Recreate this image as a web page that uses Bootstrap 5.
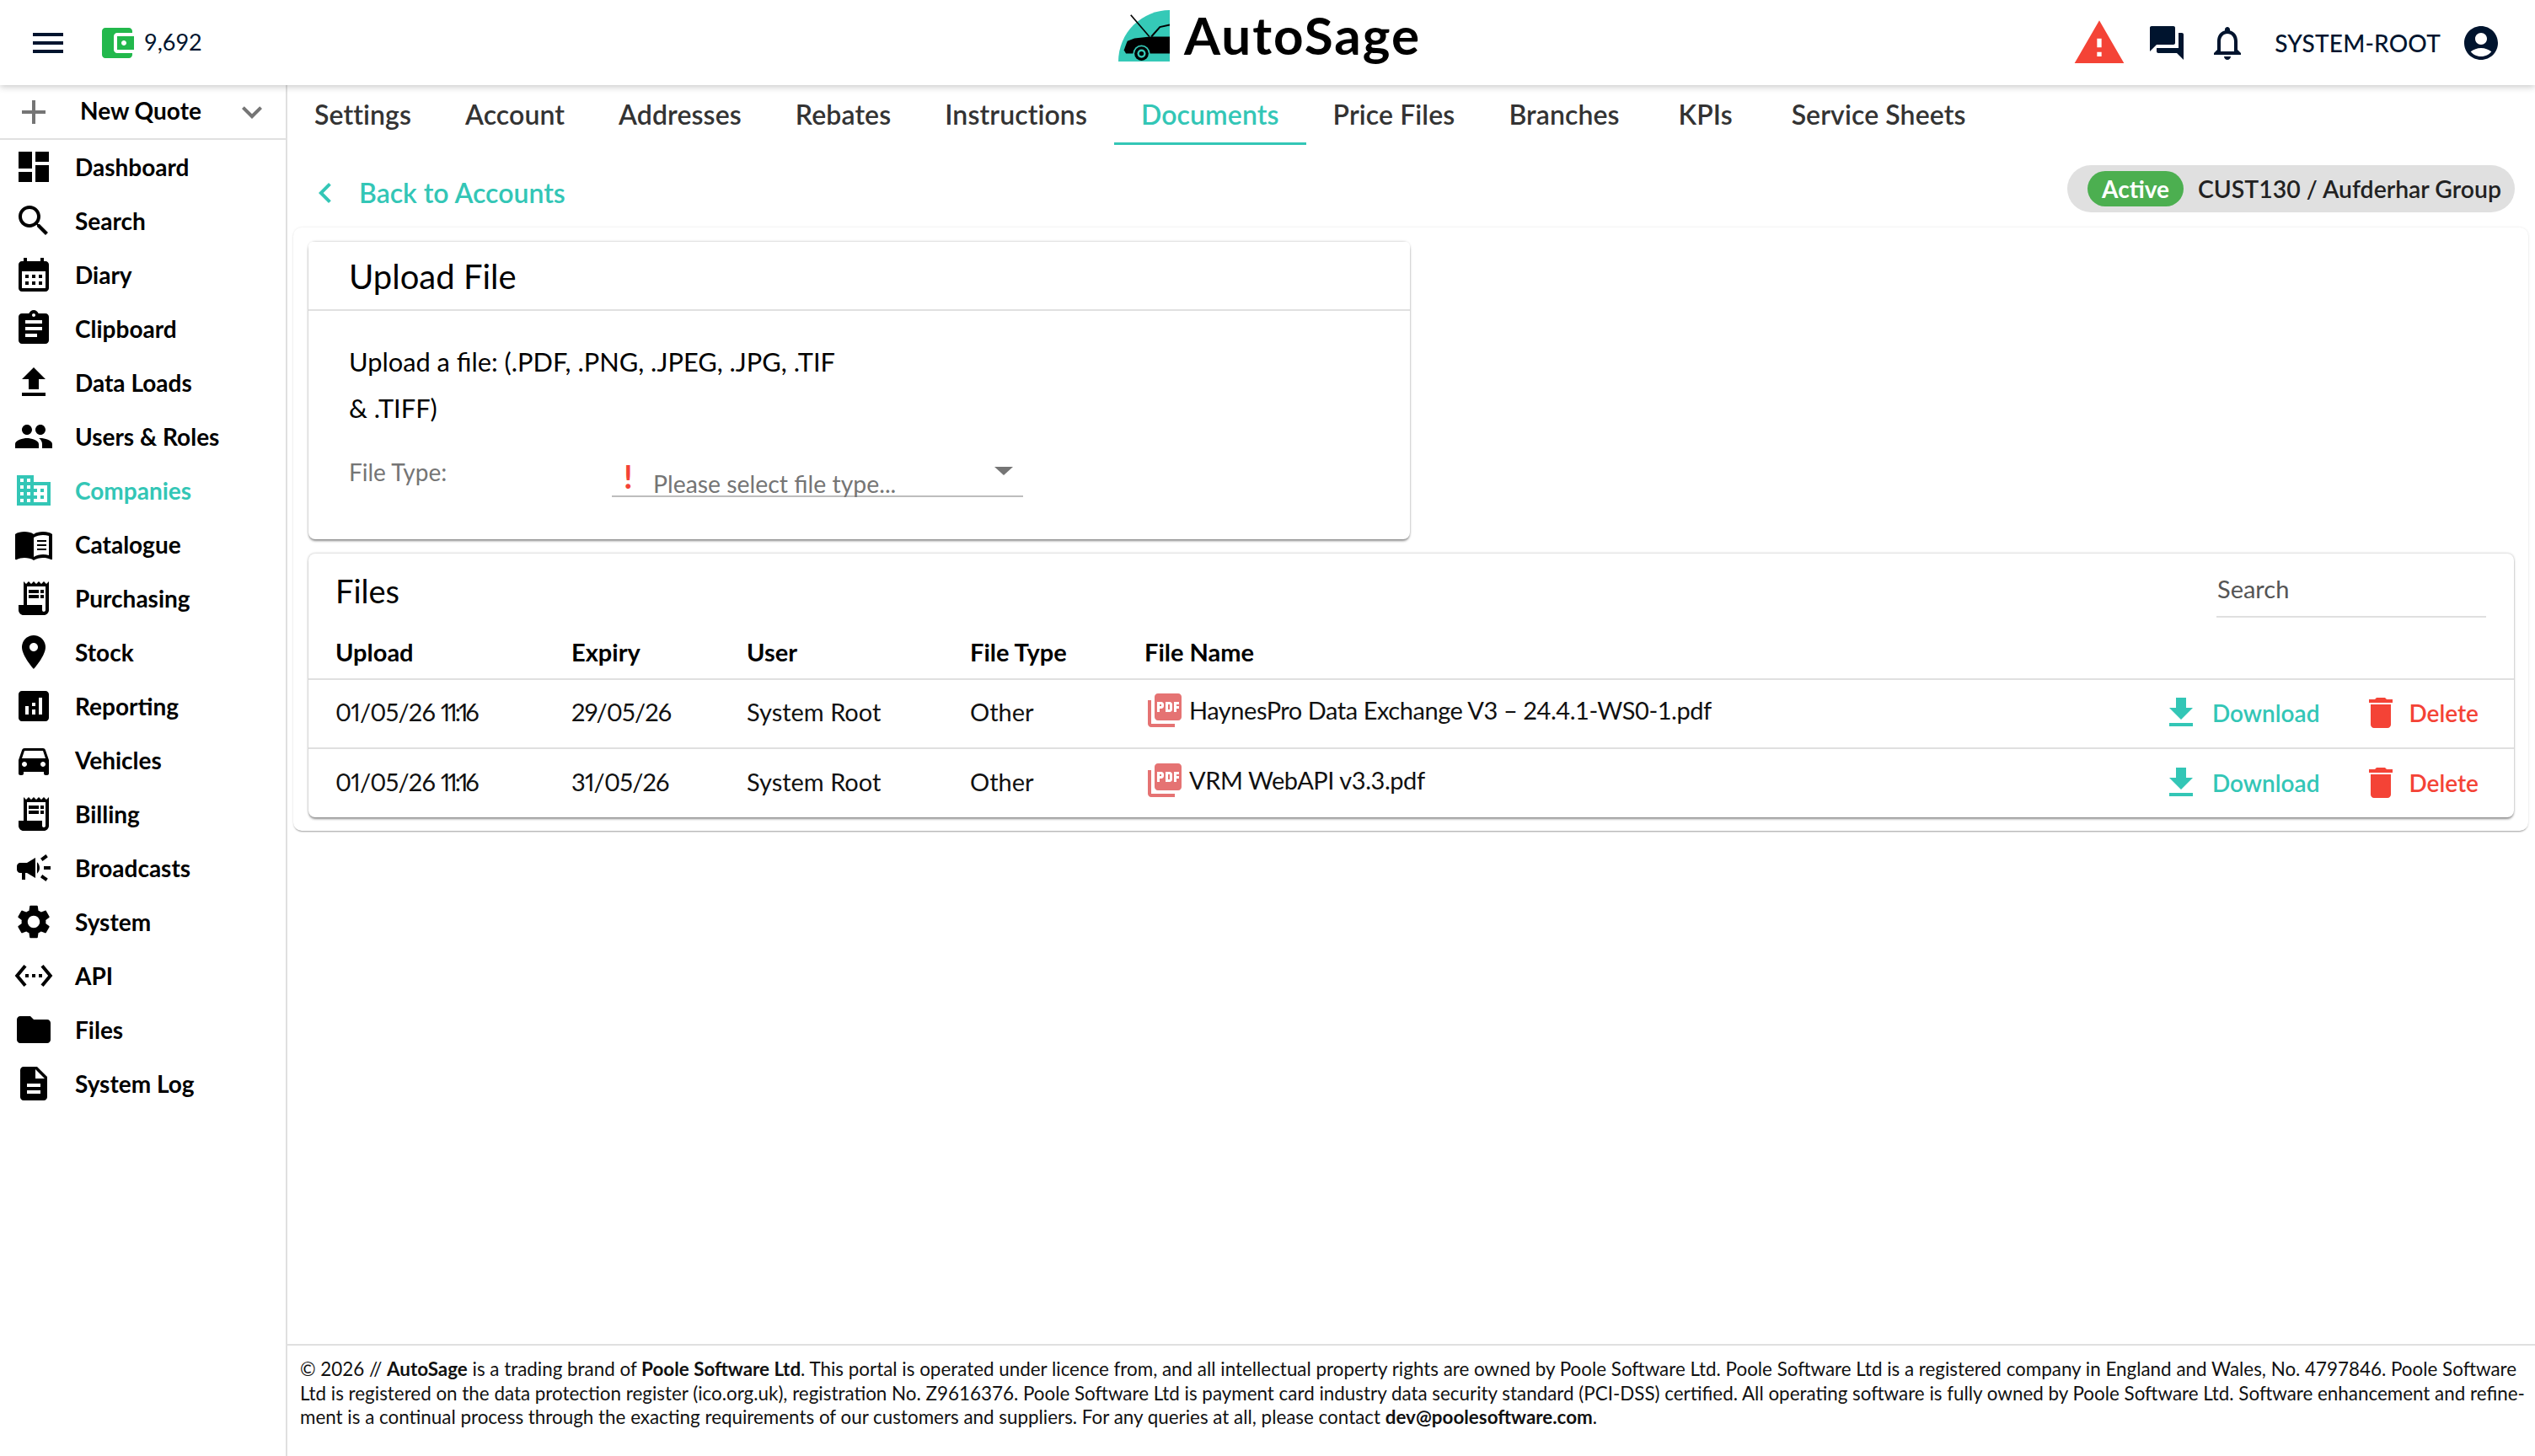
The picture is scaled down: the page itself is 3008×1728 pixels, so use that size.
<!DOCTYPE html>
<html lang="en">
<head>
  <meta charset="UTF-8"/>
  <meta name="viewport" content="width=device-width, initial-scale=1.0"/>
  <title>AutoSage - Documents</title>
  <link href="https://cdn.jsdelivr.net/npm/bootstrap@5.3.0/dist/css/bootstrap.min.css" rel="stylesheet"/>
  <script src="https://cdn.jsdelivr.net/npm/bootstrap@5.3.0/dist/js/bootstrap.bundle.min.js" defer></script>
  <style>
    :root {
      --teal: #33c6b6;
      --red: #f44336;
      --navy: #00142e;
      --line: #e0e0e0;
    }

    body {
      font-family: "Lato", "Liberation Sans", sans-serif;
      font-size: 29px;
      color: #000;
      background: #fff;
    }

    svg { fill: currentColor; flex-shrink: 0; display: block; }
    .ic-48 { width: 48px; height: 48px; }

    /* top bar */
    .top-bar {
      height: 101px;
      flex-shrink: 0;
      background: #fff;
      box-shadow: 0 2px 8px rgba(0,0,0,.22);
      z-index: 5;
      color: var(--navy);
    }
    .top-side { flex: 1 1 0; }
    .credit-count { font-size: 27px; margin-left: 12px; }
    .wallet-ic { width: 38px; height: 36px; color: #22b84c; margin-left: 40px; }
    .warn-ic { width: 64px; height: 64px; color: var(--red); }
    .brand-logo { width: 61px; height: 61px; margin: -16px 0 0 12px; }
    .brand-text { font-size: 62px; font-weight: 700; color: #000; margin-left: 17px; line-height: 1; margin-top: -20px; letter-spacing: 2px; }
    .user-name { font-size: 28px; font-weight: 500; margin: 0 25px 0 8px; letter-spacing: .2px; }

    /* sidebar */
    .side-bar { width: 341px; flex-shrink: 0; border-right: 2px solid var(--line); }
    .quote-row {
      height: 65px;
      padding-left: 16px;
      padding-right: 16px;
      border-bottom: 2px solid var(--line);
      color: #757575;
    }
    .quote-row span { color: #000; font-weight: 700; font-size: 28px; margin: -3px 0 0 31px; flex-grow: 1; }
    .side-link {
      height: 64px;
      padding: 0 0 0 16px;
      border: 0;
      font-size: 28px;
      font-weight: 700;
      color: #000;
      gap: 25px;
    }
    .side-link.is-on { color: var(--teal); }

    /* tabs */
    .tab-strip { height: 71px; flex-wrap: nowrap; }
    .tab-strip .nav-link {
      height: 71px;
      min-width: 140px;
      text-align: center;
      padding: 11px 32px 0;
      font-size: 32px;
      font-weight: 600;
      letter-spacing: .1px;
      color: #333;
      border-radius: 0;
      border-bottom: 3px solid transparent;
    }
    .tab-strip .nav-link.active { color: var(--teal); border-bottom-color: var(--teal); }

    .back-row { height: 98px; }
    .back-link { color: var(--teal); font-size: 32px; font-weight: 600; text-decoration: none; padding-left: 21px; gap: 16px; margin-top: 16px; }
    .status-pill {
      background: var(--line);
      height: 56px;
      width: 531px;
      margin-right: 24px;
      margin-top: 6px;
      padding-left: 24px;
      font-size: 28.4px;
      font-weight: 600;
      color: #222;
      gap: 17px;
    }
    .status-pill .badge {
      background: #4caf50;
      font-size: 28px;
      font-weight: 700;
      height: 42px;
      width: 114px;
      line-height: 42px;
      padding: 0;
    }

    /* panels */
    .outer-panel {
      margin: 0 8px 0 7px;
      padding: 17px 17px 16px 18px;
      border-radius: 10px;
      box-shadow: 0 0 3px rgba(0,0,0,.1), 0 2px 2px -1px rgba(0,0,0,.35);
    }
    .soft-card {
      border: 0;
      border-radius: 8px;
      box-shadow: 0 0 3px rgba(0,0,0,.3), 0 3px 3px -1px rgba(0,0,0,.4);
    }
    .upload-card { width: 1307px; height: 353px; margin-bottom: 17px; }
    .upload-card .card-header {
      height: 82px;
      background: #fff;
      padding: 0 48px;
      font-size: 40px;
      line-height: 82px;
      border-bottom: 2px solid var(--line);
    }
    .upload-card .card-body { padding: 33px 48px 0; }
    .upload-note { font-size: 30.8px; line-height: 55px; width: 600px; margin-bottom: 29px; }
    .type-label { width: 312px; color: #757575; font-size: 28px; margin-top: -2px; }
    .type-select {
      width: 488px;
      height: 49px;
      border-bottom: 2px solid #bdbdbd;
      padding: 9px 0 0 49px;
      color: #757575;
      font-size: 28.4px;
      line-height: 48px;
      position: relative;
    }
    .req-mark { position: absolute; left: 14px; top: 5px; color: var(--red); font-size: 38px; font-weight: 700; line-height: 1; }
    .drop-arrow {
      position: absolute; right: 12px; top: 13px;
      border-left: 11px solid transparent;
      border-right: 11px solid transparent;
      border-top: 10px solid #757575;
    }

    .files-head { height: 92px; padding: 0 33px 0 32px; }
    .files-title { font-size: 38px; margin-top: -3px; }
    .files-search {
      width: 320px;
      height: 56px;
      border: 0;
      border-bottom: 2px solid var(--line);
      border-radius: 0;
      padding: 0 0 12px 1px;
      font-size: 29px;
      color: #555;
      margin-top: 4px;
    }
    .files-search::placeholder { color: #555; }
    .files-table { table-layout: fixed; margin: 0; }
    .files-table th, .files-table td {
      vertical-align: middle;
      padding: 0;
      font-size: 29px;
      border-bottom: 2px solid var(--line);
      white-space: nowrap;
      color: #111;
    }
    .files-table th { height: 47px; font-weight: 700; padding: 3px 0 9px; color: #000; }
    .files-table td { height: 82px; padding-bottom: 3px; }
    .files-table tr:last-child td { border-bottom: 0; }
    .files-table th:first-child, .files-table td:first-child { padding-left: 32px; }
    .date-cell { letter-spacing: -.8px; font-variant-numeric: proportional-nums; }
    .time-part { letter-spacing: -3px; }
    .pdf-ic { color: #e57373; margin: 0 5px 0 0; }
    .file-cell { font-size: 29px; margin-top: -4px; letter-spacing: -.45px; }
    .act-group { margin-top: 2px; }
    .act-btn { padding: 0; border: 0; font-size: 28px; font-weight: 600; text-decoration: none; }
    .act-down { color: var(--teal); gap: 13px; }
    .act-del { color: var(--red); gap: 9px; margin-left: 49px; margin-right: 42px; }

    .page-foot {
      border-top: 2px solid var(--line);
      height: 133px;
      padding: 14px 8px 0 15px;
      font-size: 22.4px;
      line-height: 28.5px;
      color: #111;
      white-space: nowrap;
      flex-shrink: 0;
    }
  </style>
</head>
<body class="d-flex flex-column vh-100 overflow-hidden">

<!-- Top bar -->
<header class="top-bar d-flex align-items-center">
  <div class="top-side d-flex align-items-center" style="padding-left:33px">
    <svg class="ic-48" viewBox="0 0 24 24"><path d="M3 18h18v-2H3v2zm0-5h18v-2H3v2zm0-7v2h18V6H3z"/></svg>
    <svg class="wallet-ic" viewBox="3 3 19 18"><path fill-rule="evenodd" d="M21 18v1c0 1.1-.9 2-2 2H5c-1.11 0-2-.9-2-2V5c0-1.1.89-2 2-2h14c1.1 0 2 .9 2 2v1h-9c-1.11 0-2 .9-2 2v8c0 1.1.89 2 2 2h9zm-9-2h10V8H12v8zm4-2.5c-.83 0-1.5-.67-1.5-1.5s.67-1.5 1.5-1.5 1.5.67 1.5 1.5-.67 1.5-1.5 1.5z"/></svg>
    <span class="credit-count">9,692</span>
  </div>
  <div class="d-flex align-items-center">
    <svg class="brand-logo" viewBox="18 18 182 182">
      <path fill="#35c9b7" d="M200 18A182 182 0 0 0 18 200H200Z"/>
      <path fill="#000" d="M200 112H130L75 118 50 128 45 140 38 160 45 172H200Z"/>
      <path fill="none" stroke="#000" stroke-width="5" d="M62 35 128 112"/>
      <path fill="none" stroke="#000" stroke-width="6" d="M135 112 165 78 200 70"/>
      <circle cx="100" cy="172" r="30" fill="#35c9b7"/>
      <circle cx="100" cy="172" r="25" fill="#000"/>
      <circle cx="100" cy="172" r="15" fill="#35c9b7"/>
      <circle cx="100" cy="172" r="8" fill="#000"/>
    </svg>
    <span class="brand-text">AutoSage</span>
  </div>
  <div class="top-side d-flex align-items-center justify-content-end gap-4" style="padding-right:40px">
    <svg class="warn-ic" viewBox="0 0 24 24"><path d="M1 21h22L12 2 1 21zm12-3h-2v-2h2v2zm0-4h-2v-4h2v4z"/></svg>
    <svg class="ic-48" viewBox="0 0 24 24"><path d="M21 6h-2v9H6v2c0 .55.45 1 1 1h11l4 4V7c0-.55-.45-1-1-1zm-4 6V3c0-.55-.45-1-1-1H3c-.55 0-1 .45-1 1v14l4-4h10c.55 0 1-.45 1-1z"/></svg>
    <svg class="ic-48" viewBox="0 0 24 24"><path d="M12 22c1.1 0 2-.9 2-2h-4c0 1.1.9 2 2 2zm6-6v-5c0-3.07-1.63-5.64-4.5-6.32V4c0-.83-.67-1.5-1.5-1.5s-1.5.67-1.5 1.5v.68C7.64 5.36 6 7.92 6 11v5l-2 2v1h16v-1l-2-2zm-2 1H8v-6c0-2.48 1.51-4.5 4-4.5s4 2.02 4 4.5v6z"/></svg>
    <span class="user-name">SYSTEM-ROOT</span>
    <svg class="ic-48" style="margin-left:-25px" viewBox="0 0 24 24"><path d="M12 2C6.48 2 2 6.48 2 12s4.48 10 10 10 10-4.48 10-10S17.52 2 12 2zm0 4c1.93 0 3.5 1.57 3.5 3.5S13.93 13 12 13s-3.5-1.57-3.5-3.5S10.07 6 12 6zm0 14c-2.03 0-4.43-.82-6.14-2.88C7.55 15.8 9.68 15 12 15s4.45.8 6.14 2.12C16.43 19.18 14.03 20 12 20z"/></svg>
  </div>
</header>

<div class="d-flex flex-grow-1 overflow-hidden">

  <!-- Sidebar -->
  <aside class="side-bar">
    <div class="quote-row d-flex align-items-center">
      <svg class="ic-48" viewBox="0 0 24 24"><path d="M19 13h-6v6h-2v-6H5v-2h6V5h2v6h6v2z"/></svg>
      <span>New Quote</span>
      <svg class="ic-48" viewBox="0 0 24 24"><path d="M16.59 8.59 12 13.17 7.41 8.59 6 10l6 6 6-6z"/></svg>
    </div>
    <div class="list-group list-group-flush">
      <a href="#" class="list-group-item side-link d-flex align-items-center">
        <svg class="ic-48" viewBox="0 0 24 24"><path d="M3 13h8V3H3v10zm0 8h8v-6H3v6zm10 0h8V11h-8v10zm0-18v6h8V3h-8z"/></svg>Dashboard</a>
      <a href="#" class="list-group-item side-link d-flex align-items-center">
        <svg class="ic-48" viewBox="0 0 24 24"><path d="M15.5 14h-.79l-.28-.27C15.41 12.59 16 11.11 16 9.5 16 5.91 13.09 3 9.5 3S3 5.91 3 9.5 5.91 16 9.5 16c1.61 0 3.09-.59 4.23-1.57l.27.28v.79l5 4.99L20.49 19l-4.99-5zm-6 0C7.01 14 5 11.99 5 9.5S7.01 5 9.5 5 14 7.01 14 9.5 11.99 14 9.5 14z"/></svg>Search</a>
      <a href="#" class="list-group-item side-link d-flex align-items-center">
        <svg class="ic-48" viewBox="0 0 24 24"><path d="M19 4h-1V2h-2v2H8V2H6v2H5c-1.11 0-1.99.9-1.99 2L3 20c0 1.1.89 2 2 2h14c1.1 0 2-.9 2-2V6c0-1.1-.9-2-2-2zm0 16H5V10h14v10zM9 14H7v-2h2v2zm4 0h-2v-2h2v2zm4 0h-2v-2h2v2zm-8 4H7v-2h2v2zm4 0h-2v-2h2v2zm4 0h-2v-2h2v2z"/></svg>Diary</a>
      <a href="#" class="list-group-item side-link d-flex align-items-center">
        <svg class="ic-48" viewBox="0 0 24 24"><path d="M19 3h-4.18C14.4 1.84 13.3 1 12 1c-1.3 0-2.4.84-2.82 2H5c-1.1 0-2 .9-2 2v14c0 1.1.9 2 2 2h14c1.1 0 2-.9 2-2V5c0-1.1-.9-2-2-2zm-7 0c.55 0 1 .45 1 1s-.45 1-1 1-1-.45-1-1 .45-1 1-1zm2 14H7v-2h7v2zm3-4H7v-2h10v2zm0-4H7V7h10v2z"/></svg>Clipboard</a>
      <a href="#" class="list-group-item side-link d-flex align-items-center">
        <svg class="ic-48" viewBox="0 0 24 24"><path d="M9 16h6v-6h4l-7-7-7 7h4zm-4 2h14v2H5z"/></svg>Data Loads</a>
      <a href="#" class="list-group-item side-link d-flex align-items-center">
        <svg class="ic-48" viewBox="0 0 24 24"><path d="M16 11c1.66 0 2.99-1.34 2.99-3S17.66 5 16 5c-1.66 0-3 1.34-3 3s1.34 3 3 3zm-8 0c1.66 0 2.99-1.34 2.99-3S9.66 5 8 5C6.34 5 5 6.34 5 8s1.34 3 3 3zm0 2c-2.33 0-7 1.17-7 3.5V19h14v-2.5c0-2.33-4.67-3.5-7-3.5zm8 0c-.29 0-.62.02-.97.05 1.16.84 1.97 1.97 1.97 3.45V19h6v-2.5c0-2.33-4.67-3.5-7-3.5z"/></svg>Users &amp; Roles</a>
      <a href="#" class="list-group-item side-link is-on d-flex align-items-center">
        <svg class="ic-48" viewBox="0 0 24 24"><path d="M12 7V3H2v18h20V7H12zM6 19H4v-2h2v2zm0-4H4v-2h2v2zm0-4H4V9h2v2zm0-4H4V5h2v2zm4 12H8v-2h2v2zm0-4H8v-2h2v2zm0-4H8V9h2v2zm0-4H8V5h2v2zm10 12h-8v-2h2v-2h-2v-2h2v-2h-2V9h8v10zm-2-8h-2v2h2v-2zm0 4h-2v2h2v-2z"/></svg>Companies</a>
      <a href="#" class="list-group-item side-link d-flex align-items-center">
        <svg class="ic-48" viewBox="0 0 24 24"><path d="M21 5c-1.11-.35-2.33-.5-3.5-.5-1.95 0-4.05.4-5.5 1.5-1.45-1.1-3.55-1.5-5.5-1.5S2.45 4.9 1 6v14.65c0 .25.25.5.5.5.1 0 .15-.05.25-.05C3.1 20.45 5.05 20 6.5 20c1.95 0 4.05.4 5.5 1.5 1.35-.85 3.8-1.5 5.5-1.5 1.65 0 3.35.3 4.75 1.05.1.05.15.05.25.05.25 0 .5-.25.5-.5V6c-.6-.45-1.25-.75-2-1zm0 13.5c-1.1-.35-2.3-.5-3.5-.5-1.7 0-4.15.65-5.5 1.5V8c1.35-.85 3.8-1.5 5.5-1.5 1.2 0 2.4.15 3.5.5v11.5z"/><path d="M14 9.5h5.5v1H14zm0 2.5h5.5v1H14zm0 2.5h5.5v1H14z"/></svg>Catalogue</a>
      <a href="#" class="list-group-item side-link d-flex align-items-center">
        <svg class="ic-48" viewBox="0 0 24 24"><path d="M19.5 3.5 18 2l-1.5 1.5L15 2l-1.5 1.5L12 2l-1.5 1.5L9 2 7.5 3.5 6 2v14H3v3c0 1.66 1.34 3 3 3h12c1.66 0 3-1.34 3-3V2l-1.5 1.5zM19 19c0 .55-.45 1-1 1s-1-.45-1-1v-3H8V5h11v14z"/><path d="M9 7h6v2H9zm7 0h2v2h-2zm-7 3h6v2H9zm7 0h2v2h-2z"/></svg>Purchasing</a>
      <a href="#" class="list-group-item side-link d-flex align-items-center">
        <svg class="ic-48" viewBox="0 0 24 24"><path d="M12 2C8.13 2 5 5.13 5 9c0 5.25 7 13 7 13s7-7.75 7-13c0-3.87-3.13-7-7-7zm0 9.5c-1.38 0-2.5-1.12-2.5-2.5s1.12-2.5 2.5-2.5 2.5 1.12 2.5 2.5-1.12 2.5-2.5 2.5z"/></svg>Stock</a>
      <a href="#" class="list-group-item side-link d-flex align-items-center">
        <svg class="ic-48" viewBox="0 0 24 24"><path d="M19 3H5c-1.1 0-2 .9-2 2v14c0 1.1.9 2 2 2h14c1.1 0 2-.9 2-2V5c0-1.1-.9-2-2-2zM9 17H7v-5h2v5zm4 0h-2v-3h2v3zm0-5h-2v-2h2v2zm4 5h-2V7h2v10z"/></svg>Reporting</a>
      <a href="#" class="list-group-item side-link d-flex align-items-center">
        <svg class="ic-48" viewBox="0 0 24 24"><path d="M18.92 6.01C18.72 5.42 18.16 5 17.5 5h-11c-.66 0-1.21.42-1.42 1.01L3 12v8c0 .55.45 1 1 1h1c.55 0 1-.45 1-1v-1h12v1c0 .55.45 1 1 1h1c.55 0 1-.45 1-1v-8l-2.08-5.99zM6.5 16c-.83 0-1.5-.67-1.5-1.5S5.67 13 6.5 13s1.5.67 1.5 1.5S7.33 16 6.5 16zm11 0c-.83 0-1.5-.67-1.5-1.5s.67-1.5 1.5-1.5 1.5.67 1.5 1.5-.67 1.5-1.5 1.5zM5 11l1.5-4.5h11L19 11H5z"/></svg>Vehicles</a>
      <a href="#" class="list-group-item side-link d-flex align-items-center">
        <svg class="ic-48" viewBox="0 0 24 24"><path d="M19.5 3.5 18 2l-1.5 1.5L15 2l-1.5 1.5L12 2l-1.5 1.5L9 2 7.5 3.5 6 2v14H3v3c0 1.66 1.34 3 3 3h12c1.66 0 3-1.34 3-3V2l-1.5 1.5zM19 19c0 .55-.45 1-1 1s-1-.45-1-1v-3H8V5h11v14z"/><path d="M9 7h6v2H9zm7 0h2v2h-2zm-7 3h6v2H9zm7 0h2v2h-2z"/></svg>Billing</a>
      <a href="#" class="list-group-item side-link d-flex align-items-center">
        <svg class="ic-48" viewBox="0 0 24 24"><path d="M18 11v2h4v-2h-4zm-2 6.61c.96.71 2.21 1.65 3.2 2.39.4-.53.8-1.07 1.2-1.6-.99-.74-2.24-1.68-3.2-2.4-.4.54-.8 1.08-1.2 1.61zM20.4 5.6c-.4-.53-.8-1.07-1.2-1.6-.99.74-2.24 1.68-3.2 2.4.4.53.8 1.07 1.2 1.6.96-.72 2.21-1.65 3.2-2.4zM4 9c-1.1 0-2 .9-2 2v2c0 1.1.9 2 2 2h1v4h2v-4h1l5 3V6L8 9H4zm11.5 3c0-1.33-.58-2.53-1.5-3.35v6.69c.92-.81 1.5-2.01 1.5-3.34z"/></svg>Broadcasts</a>
      <a href="#" class="list-group-item side-link d-flex align-items-center">
        <svg class="ic-48" viewBox="0 0 24 24"><path d="M19.14 12.94c.04-.3.06-.61.06-.94 0-.32-.02-.64-.07-.94l2.03-1.58c.18-.14.23-.41.12-.61l-1.92-3.32c-.12-.22-.37-.29-.59-.22l-2.39.96c-.5-.38-1.03-.7-1.62-.94l-.36-2.54c-.04-.24-.24-.41-.48-.41h-3.84c-.24 0-.43.17-.47.41l-.36 2.54c-.59.24-1.13.57-1.62.94l-2.39-.96c-.22-.08-.47 0-.59.22L2.74 8.87c-.12.21-.08.47.12.61l2.03 1.58c-.05.3-.09.63-.09.94s.02.64.07.94l-2.03 1.58c-.18.14-.23.41-.12.61l1.92 3.32c.12.22.37.29.59.22l2.39-.96c.5.38 1.03.7 1.62.94l.36 2.54c.05.24.24.41.48.41h3.84c.24 0 .44-.17.47-.41l.36-2.54c.59-.24 1.13-.56 1.62-.94l2.39.96c.22.08.47 0 .59-.22l1.92-3.32c.12-.22.07-.47-.12-.61l-2.01-1.58zM12 15.6c-1.98 0-3.6-1.62-3.6-3.6s1.62-3.6 3.6-3.6 3.6 1.62 3.6 3.6-1.62 3.6-3.6 3.6z"/></svg>System</a>
      <a href="#" class="list-group-item side-link d-flex align-items-center">
        <svg class="ic-48" viewBox="0 0 24 24"><path d="M7.77 6.76 6.23 5.48.82 12l5.41 6.52 1.54-1.28L3.42 12l4.35-5.24zM7 13h2v-2H7v2zm10-2h-2v2h2v-2zm-6 2h2v-2h-2v2zm6.77-7.52-1.54 1.28L20.58 12l-4.35 5.24 1.54 1.28L23.18 12l-5.41-6.52z"/></svg>API</a>
      <a href="#" class="list-group-item side-link d-flex align-items-center">
        <svg class="ic-48" viewBox="0 0 24 24"><path d="M10 4H4c-1.1 0-1.99.9-1.99 2L2 18c0 1.1.9 2 2 2h16c1.1 0 2-.9 2-2V8c0-1.1-.9-2-2-2h-8l-2-2z"/></svg>Files</a>
      <a href="#" class="list-group-item side-link d-flex align-items-center">
        <svg class="ic-48" viewBox="0 0 24 24"><path d="M14 2H6c-1.1 0-1.99.9-1.99 2L4 20c0 1.1.89 2 1.99 2H18c1.1 0 2-.9 2-2V8l-6-6zm2 16H8v-2h8v2zm0-4H8v-2h8v2zm-3-5V3.5L18.5 9H13z"/></svg>System Log</a>
    </div>
  </aside>

  <!-- Main -->
  <main class="flex-grow-1 d-flex flex-column overflow-hidden">
    <ul class="nav tab-strip">
      <li class="nav-item"><a class="nav-link" href="#">Settings</a></li>
      <li class="nav-item"><a class="nav-link" href="#">Account</a></li>
      <li class="nav-item"><a class="nav-link" href="#">Addresses</a></li>
      <li class="nav-item"><a class="nav-link" href="#">Rebates</a></li>
      <li class="nav-item"><a class="nav-link" href="#">Instructions</a></li>
      <li class="nav-item"><a class="nav-link active" href="#">Documents</a></li>
      <li class="nav-item"><a class="nav-link" href="#">Price Files</a></li>
      <li class="nav-item"><a class="nav-link" href="#">Branches</a></li>
      <li class="nav-item"><a class="nav-link" href="#">KPIs</a></li>
      <li class="nav-item"><a class="nav-link" href="#">Service Sheets</a></li>
    </ul>

    <div class="back-row d-flex align-items-center justify-content-between">
      <a href="#" class="back-link d-flex align-items-center">
        <svg class="ic-48" viewBox="0 0 24 24"><path d="M15.41 7.41 14 6l-6 6 6 6 1.41-1.41L10.83 12z"/></svg>
        Back to Accounts</a>
      <div class="status-pill rounded-pill d-flex align-items-center">
        <span class="badge rounded-pill">Active</span>
        <span>CUST130 / Aufderhar Group</span>
      </div>
    </div>

    <div class="outer-panel">
      <div class="card soft-card upload-card">
        <div class="card-header">Upload File</div>
        <div class="card-body">
          <p class="upload-note">Upload a file: (.PDF, .PNG, .JPEG, .JPG, .TIF &amp; .TIFF)</p>
          <div class="d-flex">
            <div class="type-label">File Type:</div>
            <div class="type-select">
              <span class="req-mark">!</span>
              Please select file type...
              <span class="drop-arrow"></span>
            </div>
          </div>
        </div>
      </div>

      <div class="card soft-card">
        <div class="files-head d-flex align-items-center justify-content-between">
          <div class="files-title">Files</div>
          <input type="text" class="form-control files-search" placeholder="Search">
        </div>
        <table class="table files-table">
          <colgroup>
            <col style="width:312px"><col style="width:208px"><col style="width:265px"><col style="width:207px"><col><col style="width:430px">
          </colgroup>
          <thead>
            <tr><th>Upload</th><th>Expiry</th><th>User</th><th>File Type</th><th>File Name</th><th></th></tr>
          </thead>
          <tbody>
            <tr>
              <td class="date-cell">01/05/26 <span class="time-part">11:16</span></td><td class="date-cell">29/05/26</td><td>System Root</td><td>Other</td>
              <td>
                <div class="d-flex align-items-center file-cell">
                  <svg class="ic-48 pdf-ic" viewBox="0 0 24 24"><path d="M20 2H8c-1.1 0-2 .9-2 2v12c0 1.1.9 2 2 2h12c1.1 0 2-.9 2-2V4c0-1.1-.9-2-2-2zm-8.5 7.5c0 .83-.67 1.5-1.5 1.5H9v2H7.5V7H10c.83 0 1.5.67 1.5 1.5v1zm5 2c0 .83-.67 1.5-1.5 1.5h-2.5V7H15c.83 0 1.5.67 1.5 1.5v3zm4-3H19v1h1.5V11H19v2h-1.5V7h3v1.5zM9 9.5h1v-1H9v1zM4 6H2v14c0 1.1.9 2 2 2h14v-2H4V6zm10 5.5h1v-3h-1v3z"/></svg>
                  HaynesPro Data Exchange V3 &ndash; 24.4.1-WS0-1.pdf
                </div>
              </td>
              <td>
                <div class="act-group d-flex justify-content-end">
                  <a href="#" class="btn act-btn act-down d-flex align-items-center"><svg class="ic-48" viewBox="0 0 24 24"><path d="M19 9h-4V3H9v6H5l7 7 7-7zM5 18v2h14v-2H5z"/></svg>Download</a>
                  <a href="#" class="btn act-btn act-del d-flex align-items-center"><svg class="ic-48" viewBox="0 0 24 24"><path d="M6 19c0 1.1.9 2 2 2h8c1.1 0 2-.9 2-2V7H6v12zM19 4h-3.5l-1-1h-5l-1 1H5v2h14V4z"/></svg>Delete</a>
                </div>
              </td>
            </tr>
            <tr>
              <td class="date-cell">01/05/26 <span class="time-part">11:16</span></td><td class="date-cell">31/05/26</td><td>System Root</td><td>Other</td>
              <td>
                <div class="d-flex align-items-center file-cell">
                  <svg class="ic-48 pdf-ic" viewBox="0 0 24 24"><path d="M20 2H8c-1.1 0-2 .9-2 2v12c0 1.1.9 2 2 2h12c1.1 0 2-.9 2-2V4c0-1.1-.9-2-2-2zm-8.5 7.5c0 .83-.67 1.5-1.5 1.5H9v2H7.5V7H10c.83 0 1.5.67 1.5 1.5v1zm5 2c0 .83-.67 1.5-1.5 1.5h-2.5V7H15c.83 0 1.5.67 1.5 1.5v3zm4-3H19v1h1.5V11H19v2h-1.5V7h3v1.5zM9 9.5h1v-1H9v1zM4 6H2v14c0 1.1.9 2 2 2h14v-2H4V6zm10 5.5h1v-3h-1v3z"/></svg>
                  VRM WebAPI v3.3.pdf
                </div>
              </td>
              <td>
                <div class="act-group d-flex justify-content-end">
                  <a href="#" class="btn act-btn act-down d-flex align-items-center"><svg class="ic-48" viewBox="0 0 24 24"><path d="M19 9h-4V3H9v6H5l7 7 7-7zM5 18v2h14v-2H5z"/></svg>Download</a>
                  <a href="#" class="btn act-btn act-del d-flex align-items-center"><svg class="ic-48" viewBox="0 0 24 24"><path d="M6 19c0 1.1.9 2 2 2h8c1.1 0 2-.9 2-2V7H6v12zM19 4h-3.5l-1-1h-5l-1 1H5v2h14V4z"/></svg>Delete</a>
                </div>
              </td>
            </tr>
          </tbody>
        </table>
      </div>
    </div>

    <footer class="page-foot mt-auto">
      <div>&copy; 2026 // <b>AutoSage</b> is a trading brand of <b>Poole Software Ltd</b>. This portal is operated under licence from, and all intellectual property rights are owned by Poole Software Ltd. Poole Software Ltd is a registered company in England and Wales, No. 4797846. Poole Software</div>
      <div>Ltd is registered on the data protection register (ico.org.uk), registration No. Z9616376. Poole Software Ltd is payment card industry data security standard (PCI-DSS) certified. All operating software is fully owned by Poole Software Ltd. Software enhancement and refine-</div>
      <div>ment is a continual process through the exacting requirements of our customers and suppliers. For any queries at all, please contact <b>dev@poolesoftware.com</b>.</div>
    </footer>
  </main>
</div>

</body>
</html>
